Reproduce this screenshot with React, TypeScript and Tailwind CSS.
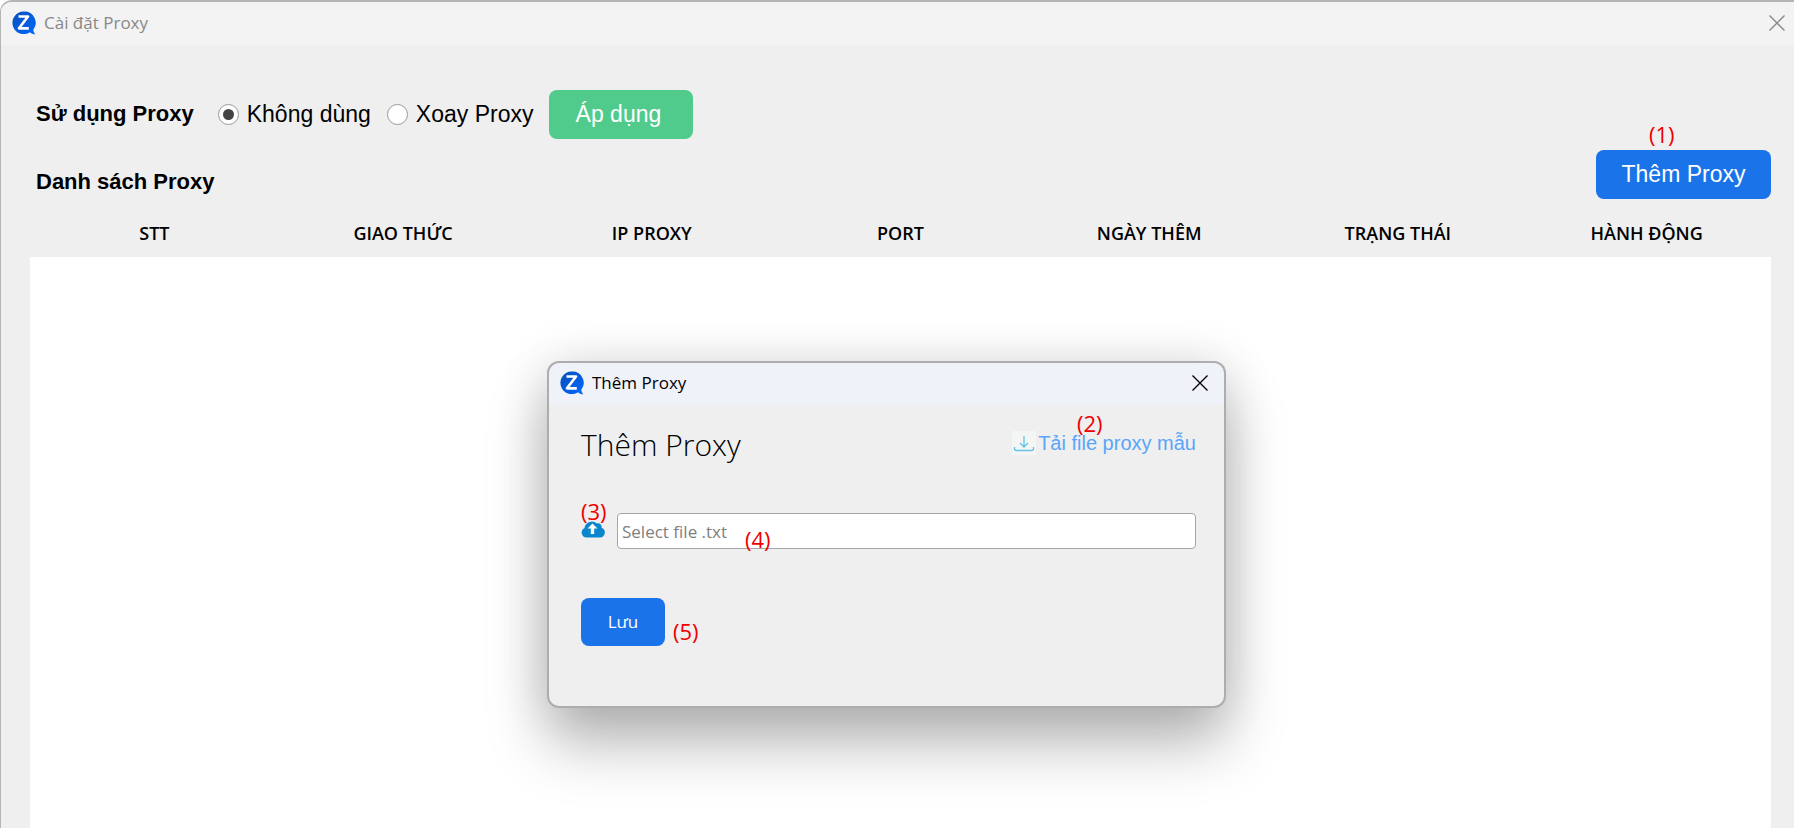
import { useId, useState } from "react"
import type { ReactNode } from "react"

const columns = [
  "STT",
  "GIAO THỨC",
  "IP PROXY",
  "PORT",
  "NGÀY THÊM",
  "TRẠNG THÁI",
  "HÀNH ĐỘNG",
]

function ZaloLogo() {
  return (
    <svg viewBox="0 0 24 24" className="size-6" aria-hidden="true">
      <defs>
        <linearGradient id="logo" x1="0" y1="0" x2="1" y2="1">
          <stop offset="0" stopColor="#0a4fb8" />
          <stop offset="1" stopColor="#0068ff" />
        </linearGradient>
      </defs>
      <path
        d="M11.5 .5a11.3 11.3 0 1 0 6.500 20.700c1.600 1.500 3.500 2.200 5.500 2.100-1.300-1.100-2-2.700-2.200-4.600A11.300 11.300 0 0 0 11.500.5z"
        fill="url(#logo)"
      />
      <path d="M6.500 5.500h9.500L7 17.300h9.800" fill="none" stroke="#fff" strokeWidth="2.7" strokeLinejoin="round" />
    </svg>
  )
}

function CloseIcon() {
  return (
    <svg viewBox="0 0 16 16" className="size-4" fill="none" stroke="currentColor" strokeWidth="1.4" aria-hidden="true">
      <path d="M.5.5l15 15M15.500.5l-15 15" />
    </svg>
  )
}

function DownloadIcon() {
  return (
    <svg viewBox="0 0 24 24" className="size-6 bg-[#f4f5f5]" fill="none" stroke="#62c3e6" strokeWidth="1.3" aria-hidden="true">
      <path d="M12 5v11M8 12l4 4 4-4M2.500 16v1.500a2 2 0 0 0 2 2h15a2 2 0 0 0 2-2V16" />
    </svg>
  )
}

function UploadIcon() {
  return (
    <svg viewBox="0 0 24 18" className="h-[18px] w-6" aria-hidden="true">
      <path
        d="M5.500 17.500A5 5 0 0 1 3.500 8 7.500 7.500 0 0 1 16 3.500a3.500 3.500 0 0 1 4.500 4.300 5 5 0 0 1-1.500 9.700z"
        fill="#0a86cc"
      />
      <path d="M11.500 3.500l5 5h-3.300v5.500H9.800V8.500H6.500z" fill="#fff" />
    </svg>
  )
}

function Note({ className, children }: { className: string; children: ReactNode }) {
  return <span className={`absolute text-[22px] leading-6 text-[#f00000] ${className}`}>{children}</span>
}

function ModeOption({
  label,
  checked,
  onSelect,
}: {
  label: string
  checked: boolean
  onSelect: () => void
}) {
  const id = useId()

  return (
    <div className="flex items-center gap-2">
      <input
        id={id}
        type="radio"
        name="mode"
        checked={checked}
        onChange={onSelect}
        className="grid size-[21px] appearance-none place-content-center rounded-full border border-[#999] bg-white before:size-[11px] before:rounded-full checked:before:bg-[#444]"
      />
      <label htmlFor={id}>{label}</label>
    </div>
  )
}

function AddProxyDialog() {
  return (
    <section className="absolute top-[359px] left-[546px] w-[679px] rounded-xl border-2 border-[#adadad] bg-[#efefef] shadow-[0_36px_60px_rgba(0,0,0,0.28),0_0_50px_rgba(0,0,0,0.12)]">
      <header className="flex h-[42px] items-center gap-2 rounded-t-xl bg-[#f0f2f9] pr-4 pb-0.5 pl-[11px]">
        <ZaloLogo />
        <h2 className="grow text-[17px]">Thêm Proxy</h2>
        <button type="button" aria-label="Close">
          <CloseIcon />
        </button>
      </header>

      <div className="relative pr-7 pb-[60px] pl-8">
        <div className="flex items-start justify-between">
          <h3 className="pt-[18px] text-[30px] leading-[44px] font-light">Thêm Proxy</h3>
          <a href="#sample" className="mt-6 flex items-center gap-0.5 font-['Liberation_Sans',sans-serif] text-xl leading-7 text-[#5aa5f8]">
            <DownloadIcon />
            Tải file proxy mẫu
          </a>
        </div>

        <div className="mt-[46px] flex items-center gap-3">
          <button type="button" aria-label="Upload" className="pb-1">
            <UploadIcon />
          </button>
          <input
            type="text"
            aria-label="Select file"
            placeholder="Select file .txt"
            className="h-9 min-w-0 grow rounded border border-[#a5a5a5] bg-white px-1 text-[17px] placeholder:text-[#808080]"
          />
        </div>

        <button type="button" className="mt-[49px] h-12 w-[84px] rounded-lg bg-[#1a73e8] text-[17px] text-white">
          Lưu
        </button>

        <Note className="top-1.5 left-[528px]">(2)</Note>
        <Note className="top-[94px] left-8">(3)</Note>
        <Note className="top-[122px] left-[196px]">(4)</Note>
        <Note className="top-[214px] left-[124px]">(5)</Note>
      </div>
    </section>
  )
}

export default function App() {
  const [mode, setMode] = useState("none")

  return (
    <main className="relative flex min-h-screen flex-col overflow-hidden rounded-tl-xl border-t-2 border-l border-[#b5b5b5] bg-[#efefef] font-['Open_Sans',sans-serif] text-black">
      <header className="flex h-[43px] items-center gap-2 bg-[#f3f3f3] pr-[9px] pb-0.5 pl-[11px] text-[#888]">
        <ZaloLogo />
        <h1 className="grow text-[17px]">Cài đặt Proxy</h1>
        <button type="button" aria-label="Close">
          <CloseIcon />
        </button>
      </header>

      <div className="flex grow flex-col pt-[45px] pr-[23px] pl-[29px]">
        <div className="flex items-center gap-4 pl-1.5 font-['Liberation_Sans',sans-serif] text-[23px]">
          <h2 className="mr-2 pb-0.5 text-[22px] font-bold">Sử dụng Proxy</h2>
          <ModeOption label="Không dùng" checked={mode === "none"} onSelect={() => setMode("none")} />
          <ModeOption label="Xoay Proxy" checked={mode === "rotate"} onSelect={() => setMode("rotate")} />
          <button type="button" className="h-[49px] w-36 rounded-lg bg-[#50cb8b] pr-1.5 text-white">
            Áp dụng
          </button>
        </div>

        <div className="mt-[11px] flex items-center justify-between pl-1.5 font-['Liberation_Sans',sans-serif] text-[23px]">
          <h2 className="pt-3.5 text-[22px] font-bold">Danh sách Proxy</h2>
          <div className="relative">
            <Note className="-top-7 left-[53px] font-['Open_Sans',sans-serif]">(1)</Note>
            <button type="button" className="h-[49px] w-[175px] rounded-lg bg-[#1a73e8] text-white">
              Thêm Proxy
            </button>
          </div>
        </div>

        <table className="mt-[11px] w-full table-fixed text-[18px]">
          <thead>
            <tr className="h-[47px]">
              {columns.map((column) => (
                <th key={column} scope="col" className="font-semibold">
                  {column}
                </th>
              ))}
            </tr>
          </thead>
        </table>
        <div className="grow bg-white" />
      </div>

      <AddProxyDialog />
    </main>
  )
}
